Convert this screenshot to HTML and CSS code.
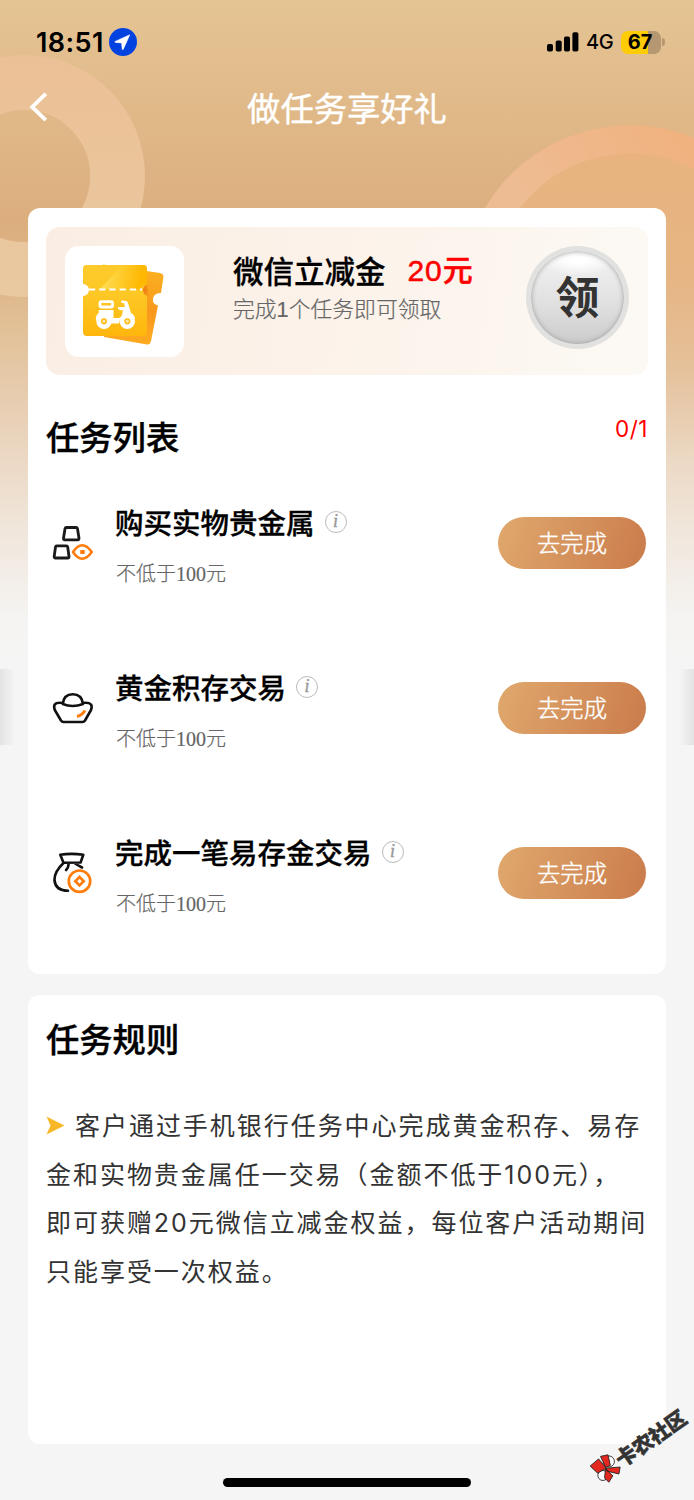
FILE: index.html
```html
<!DOCTYPE html>
<html lang="zh-CN">
<head>
<meta charset="utf-8">
<title>做任务享好礼</title>
<link rel="stylesheet" href="styles.css">
</head>
<body>
<div class="screen">
  <svg class="backdrop" width="694" height="760" viewBox="0 0 694 760" aria-hidden="true">
    <defs>
      <linearGradient id="sky" x1="0" y1="0" x2="0" y2="670" gradientUnits="userSpaceOnUse">
        <stop offset="0" stop-color="#e5c494"/>
        <stop offset=".33" stop-color="#dcae7e"/>
        <stop offset=".42" stop-color="#dfb68a"/>
        <stop offset=".5" stop-color="#e2c299"/>
        <stop offset=".63" stop-color="#e9d1b8"/>
        <stop offset=".78" stop-color="#f0e5d9"/>
        <stop offset=".92" stop-color="#f5f4f2"/>
        <stop offset="1" stop-color="#f5f5f5"/>
      </linearGradient>
      <linearGradient id="ringLeft" x1="0" y1="55" x2="0" y2="297" gradientUnits="userSpaceOnUse">
        <stop offset="0" stop-color="#ecc096"/>
        <stop offset="1" stop-color="#e9c9a0"/>
      </linearGradient>
      <linearGradient id="ringRight" x1="680" y1="130" x2="540" y2="230" gradientUnits="userSpaceOnUse">
        <stop offset="0" stop-color="#f0b27f"/>
        <stop offset="1" stop-color="#eebc93"/>
      </linearGradient>
      <linearGradient id="disc" x1="0" y1="154" x2="0" y2="460" gradientUnits="userSpaceOnUse">
        <stop offset="0" stop-color="#e8b37f"/>
        <stop offset=".4" stop-color="#e6b583"/>
        <stop offset=".7" stop-color="#e5c19a"/>
        <stop offset="1" stop-color="#ebd8c4"/>
      </linearGradient>
      <linearGradient id="edgeL"><stop offset="0" stop-color="#e3e3e3"/><stop offset="1" stop-color="#f4f4f4"/></linearGradient>
      <linearGradient id="edgeR"><stop offset="0" stop-color="#f4f4f4"/><stop offset="1" stop-color="#e3e3e3"/></linearGradient>
    </defs>
    <rect width="694" height="760" fill="url(#sky)"/>
    <circle cx="24" cy="176" r="93.500" fill="none" stroke="url(#ringLeft)" stroke-width="55"/>
    <circle cx="630" cy="293" r="168" fill="url(#disc)"/>
    <path d="M485 208A168 168 0 0 1 694 138V169A139 139 0 0 0 519 209Z" fill="url(#ringRight)"/>
    <rect y="669" width="14" height="76" fill="url(#edgeL)"/>
    <rect x="680" y="669" width="14" height="76" fill="url(#edgeR)"/>
  </svg>

  <header class="status">
    <span class="clock">18:51</span>
    <svg class="loc" width="28" height="28" viewBox="0 0 28 28"><circle cx="14" cy="14" r="14" fill="#0242e0"/><path d="M20.800 6.800 6.200 13.400q-1 .7.200 1l6.200.5.600 6.400q.4 1 1 .1z" fill="#fff" stroke="#fff" stroke-width=".6"/></svg>
    <svg class="signal" width="32" height="20" viewBox="0 0 32 20"><rect y="12" width="6" height="7.500" rx="1.800"/><rect x="8.700" y="8.500" width="6" height="11" rx="1.800"/><rect x="17" y="4.500" width="6" height="15" rx="1.800"/><rect x="25.400" y=".3" width="6" height="19.200" rx="1.800"/></svg>
    <span class="network">4G</span>
    <span class="battery">67</span>
    <span class="nub"></span>
  </header>

  <nav class="navbar">
    <svg class="back" width="20" height="30" viewBox="0 0 20 30"><path d="M17.800 1.800 4.200 15l13.600 13.200" fill="none" stroke="#fff" stroke-width="3.800"/></svg>
    <h1>做任务享好礼</h1>
  </nav>

  <section class="card tasks">
    <div class="coupon">
      <div class="tile">
        <svg width="82" height="82" viewBox="0 0 82 82">
          <defs>
            <linearGradient id="front" x1="0" y1="0" x2="0" y2="1"><stop offset="0" stop-color="#ffcb2c"/><stop offset=".4" stop-color="#fdc825"/><stop offset="1" stop-color="#ffb60d"/></linearGradient>
            <linearGradient id="rear" x1="0" y1="0" x2="0" y2="1"><stop offset="0" stop-color="#fbb31f"/><stop offset=".6" stop-color="#f8981d"/><stop offset="1" stop-color="#ffab20"/></linearGradient>
            <linearGradient id="shine" x1="18" y1="14" x2="58" y2="20" gradientUnits="userSpaceOnUse"><stop offset="0" stop-color="#ffe05a"/><stop offset="1" stop-color="#ffb802"/></linearGradient>
            <radialGradient id="notch"><stop offset="0" stop-color="#ee7d12"/><stop offset="1" stop-color="#f59b1a"/></radialGradient>
          </defs>
          <path d="M21 1.500 78 10q4 1 3.400 4L79 30q-7 0-8 5.500t5 7L69 78q-1 4-4 3.500L22 74z" fill="url(#rear)"/>
          <path d="M65 20q-10 6-7 12 3 5 9 1z" fill="url(#notch)"/>
          <path d="M4 2H61q4 0 4 4V21a6.500 6.500 0 0 0 0 12V69q0 4-4 4H5q-4 0-4-4V33a5.800 5.800 0 0 0 0-12V6q0-4 3-4z" fill="url(#front)"/>
          <path d="M41 2H61q4 0 4 4V21q-6 1-6 5H18z" fill="url(#shine)"/>
          <path d="M7 26.500H60" stroke="#fff" stroke-width="2.200" stroke-dasharray="6.200 4"/>
          <rect x="18" y="38.700" width="12.500" height="5.300" rx="1" fill="none" stroke="#fff" stroke-width="2.800"/>
          <path d="M16.500 47h15v8H37q2 0 3-3l1-5q-5 1-5-3h7l-1-4q-3 0-3-1.500t5-.5q1.500 0 2 2l3 10q4 2 4 6H38l-1 4.500h-8l-7-6-8 3q-1-5 3-8z" fill="#fff"/>
          <circle cx="22" cy="58.300" r="5.400" fill="#ffbc16" stroke="#fff" stroke-width="4.600"/><circle cx="22" cy="58.300" r="1.500" fill="#ffe9ae"/>
          <circle cx="45.300" cy="58.300" r="5.400" fill="#ffbc16" stroke="#fff" stroke-width="4.600"/><circle cx="45.300" cy="58.300" r="1.500" fill="#ffe9ae"/>
        </svg>
      </div>
      <div class="offer">
        <div class="offer-title"><span>微信立减金</span><span class="amount">20元</span></div>
        <div class="offer-note">完成1个任务即可领取</div>
      </div>
      <div class="claim"><span>领</span></div>
    </div>

    <div class="heading"><h2>任务列表</h2><span class="count">0/1</span></div>

    <div class="task">
      <svg class="task-icon" width="42" height="42" viewBox="0 0 42 42" fill="none" stroke-width="2.800" stroke-linejoin="round"><path d="M14.500 5.500h9.500q1.200 0 1.500 1.200l1.500 9.600q0 1.500-1.500 1.500H12.800q-1.300 0-1.300-1.500L13 6.700q.3-1.200 1.500-1.200zM4.800 23.800h9.500q1.200 0 1.400 1.200l1.300 9.500q0 1.500-1.300 1.500H3.500q-1.500 0-1.300-1.500L3.500 25q.2-1.200 1.300-1.200z" stroke="#1a1a1a"/><path d="M21 30Q30 16.500 39.800 30 30 43.500 21 30z" stroke="#ff7d0c" stroke-width="2.600"/><rect x="28.200" y="28" width="4.600" height="4" rx=".8" fill="#ff7d0c"/></svg>
      <div class="task-text"><div class="task-title">购买实物贵金属<i class="info">i</i></div><div class="task-note">不低于100元</div></div>
      <div class="go">去完成</div>
    </div>
    <div class="task">
      <svg class="task-icon" width="42" height="42" viewBox="0 0 42 42" fill="none" stroke="#111" stroke-width="2.600" stroke-linecap="round" stroke-linejoin="round"><path d="M10.800 17Q11.500 7.300 20.800 7.200 30 7.300 31 17 20.500 21 10.800 17zM10.800 16Q4.500 15.200 2.800 17.500 1.500 19.500 2.800 23L9 33.500q1 1.500 2.500 1.500h19q1.500 0 2.500-1.500L39 23q1.300-3.500 0-5.500-2-2.300-8-1.500"/><path d="m25 29.500q5-1.200 8-6" stroke="#ff7d0c" stroke-width="3" stroke-linecap="butt"/></svg>
      <div class="task-text"><div class="task-title">黄金积存交易<i class="info">i</i></div><div class="task-note">不低于100元</div></div>
      <div class="go">去完成</div>
    </div>
    <div class="task">
      <svg class="task-icon" width="42" height="42" viewBox="0 0 42 42" fill="none" stroke="#111" stroke-width="2.600" stroke-linecap="round" stroke-linejoin="round"><path d="M11.500 10.800 8.300 2.800q11-1.800 23 0l-2.700 7.700zM11.500 11Q2 20 2.500 28.500 3.500 38.500 16 38.700M16.600 11.500q-.2 4.500-2.500 6.500M23 11.500q2.500 1.500 7 4"/><g stroke="#ff7d0c"><circle cx="27.500" cy="29.200" r="10.700" stroke-width="2.700"/><path d="m27.500 25 4.200 4.200-4.200 4.200-4.200-4.200z" stroke-width="2.700" stroke-linejoin="miter"/></g></svg>
      <div class="task-text"><div class="task-title">完成一笔易存金交易<i class="info">i</i></div><div class="task-note">不低于100元</div></div>
      <div class="go">去完成</div>
    </div>
  </section>

  <section class="card rules">
    <h2>任务规则</h2>
    <p><svg class="arrow" width="19" height="19" viewBox="0 0 19 19"><path d="M.5.500 18.500 9.500.5 18.500 4.500 9.500z" fill="#f8b82a"/></svg>客户通过手机银行任务中心完成黄金积存、易存<br>金和实物贵金属任一交易（金额不低于100元），<br>即可获赠20元微信立减金权益，每位客户活动期间<br>只能享受一次权益。</p>
  </section>

  <div class="home-bar"></div>

  <div class="stamp">
    <svg width="26" height="28" viewBox="0 0 26 28"><g stroke="#222" stroke-width=".8"><circle cx="19" cy="10" r="5.500" fill="#fff"/><circle cx="6" cy="18" r="5" fill="#fff"/><path d="m1 3 11-1 1 12-10-1zM15 1l7 3-4 10-5-1zM13 14l12 7-5 5-8-9zM12 14l2 10-7 3-1-6z" fill="#e2281f"/></g></svg>
    <span>卡农社区</span>
  </div>
</div>
</body>
</html>
```
FILE: styles.css
```css
* { box-sizing: border-box; }
body { margin: 0; background: #f5f5f5; font-family: "Noto Sans CJK SC", sans-serif; color: #000; }
h1, h2, p { margin: 0; }
svg { display: block; flex: none; }
.screen { position: relative; width: 694px; height: 1500px; overflow: hidden; display: flex; flex-direction: column; }
.backdrop { position: absolute; left: 0; top: 0; z-index: -1; }

.status { height: 64px; padding: 20px 29px 0 36px; display: flex; align-items: center; font-family: Inter, sans-serif; }
.clock { width: 73px; font-size: 27px; font-weight: 600; letter-spacing: .4px; white-space: nowrap; }
.signal { margin-left: auto; }
.network { width: 35px; margin-left: 7px; font-size: 20px; font-weight: 500; letter-spacing: -.3px; line-height: 24px; }
.battery { width: 40px; height: 23px; border-radius: 7px; background: linear-gradient(90deg, #fdcc04 67.500%, #b59872 67.500%); font-size: 20px; font-weight: 700; line-height: 23px; text-align: center; padding-right: 2px; }
.nub { width: 3px; height: 8px; margin-left: 1px; border-radius: 0 4px 4px 0; background: #b59872; }

.navbar { height: 144px; padding: 19px 0 0 28px; display: flex; align-items: flex-start; }
.navbar .back { margin-top: 9px; }
.navbar h1 { width: 598px; font-size: 33.300px; line-height: 48px; font-weight: 400; color: #fff; text-align: center; -webkit-text-stroke: .4px #fff; }

.card { margin: 0 28px; border-radius: 12px; background: #fff; flex: none; }
.tasks { height: 766px; padding: 19px 18px 0; }
.coupon { height: 148px; padding: 0 19px; border-radius: 14px; background: linear-gradient(100deg, #faeee4, #fcf2e9 45%, #fcf9f4); display: flex; align-items: center; }
.tile { width: 119px; height: 111px; border-radius: 14px; background: #fff; display: flex; align-items: center; justify-content: center; padding-right: 3px; padding-top: 5px; }
.offer { margin-left: 49px; align-self: flex-start; padding-top: 22px; }
.offer-title { display: flex; gap: 22px; font-size: 30.500px; line-height: 42px; font-weight: 500; -webkit-text-stroke: .3px; }
.amount { padding-top: 1px; color: #f00; font-family: "Liberation Sans", "Noto Sans CJK SC", sans-serif; font-size: 30px; letter-spacing: .9px; -webkit-text-stroke: .5px #f00; }
.offer-note { margin-top: 1px; font-family: "Liberation Sans", "Noto Sans CJK SC", sans-serif; font-size: 21.800px; line-height: 34px; font-weight: 300; color: #666; -webkit-text-stroke: .2px; }
.claim { width: 103px; height: 103px; margin: 0 0 7px auto; padding: 5px; border-radius: 50%; background: #e1e1e0; }
.claim span { display: flex; align-items: center; justify-content: center; height: 93px; border-radius: 50%; background: radial-gradient(ellipse 38px 15px at 50% 10%, #fff 20%, transparent 100%), linear-gradient(#f0f0f0 12%, #dfdfdf 60%, #cbcbcb); box-shadow: inset 0 0 5px 0 #999; color: #333; font-size: 44px; font-weight: 700; line-height: 50px; padding-bottom: 5px; }

h2 { font-size: 33.300px; line-height: 48px; font-weight: 500; -webkit-text-stroke: .4px; }
.heading { height: 107px; padding-top: 37px; display: flex; justify-content: space-between; }
.count { color: #f00; font-family: Inter, sans-serif; font-size: 22.500px; line-height: 34px; letter-spacing: .5px; }

.task { height: 165px; padding: 0 2px 0 6px; display: flex; }
.task-icon { margin-top: 40px; }
.task-text { margin-left: 21px; }
.task-title { margin-top: 18px; font-size: 28.500px; line-height: 44px; font-weight: 500; display: flex; -webkit-text-stroke: .3px; }
.info { width: 22px; height: 22px; margin: 11px 0 0 10px; border: 1.500px solid #bbb; border-radius: 50%; font: italic 18px/18px "Liberation Serif", serif; text-align: center; color: #999; -webkit-text-stroke: .4px; }
.task-note { margin: 14px 0 0 1px; font-family: "Liberation Serif", "Noto Sans CJK SC", serif; font-size: 20px; line-height: 32px; color: #666; font-weight: 300; -webkit-text-stroke: .2px; }
.go { width: 148px; height: 52px; margin: 35px 0 0 auto; border-radius: 26px; background: linear-gradient(110deg, #e0a96d, #ca7b4b); color: #fff; font-size: 23.300px; line-height: 51px; font-weight: 300; -webkit-text-stroke: .4px #fff; text-align: center; }

.rules { height: 449px; margin-top: 21px; padding: 19px 0 0 18px; }
.rules p { margin-top: 40px; font-family: Inter, "Noto Sans CJK SC", sans-serif; font-size: 25px; line-height: 48.700px; letter-spacing: 1.960px; color: #333; white-space: nowrap; }
.arrow { display: inline-block; margin-right: 10px; }

.home-bar { width: 248px; height: 9px; margin: 34px auto 0; border-radius: 5px; background: #000; }
.stamp { position: absolute; left: 586px; top: 1431px; display: flex; align-items: center; transform: rotate(-35deg); color: #333; font-size: 20.500px; letter-spacing: -.3px; font-weight: 900; line-height: 28px; white-space: nowrap; -webkit-text-stroke: .5px #333; }
```
